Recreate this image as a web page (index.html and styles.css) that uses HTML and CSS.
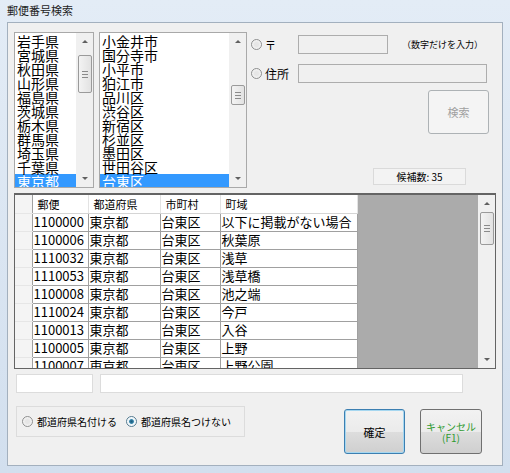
FILE: index.html
```html
<!DOCTYPE html>
<html lang="ja">
<head>
<meta charset="utf-8">
<link rel="stylesheet" href="styles.css">
</head>
<body>
<div class="window">
  <div class="titlebar">郵便番号検索</div>
  <div class="client">
    <div class="top">
      <div class="listbox lb1">
        <div class="items">
          <div class="item">岩手県</div>
          <div class="item">宮城県</div>
          <div class="item">秋田県</div>
          <div class="item">山形県</div>
          <div class="item">福島県</div>
          <div class="item">茨城県</div>
          <div class="item">栃木県</div>
          <div class="item">群馬県</div>
          <div class="item">埼玉県</div>
          <div class="item">千葉県</div>
          <div class="item sel">東京都</div>
        </div>
        <div class="vscroll">
          <div class="arrow up"></div>
          <div class="track"><div class="thumb t1"><span class="grip"></span></div></div>
          <div class="arrow down"></div>
        </div>
      </div>
      <div class="listbox lb2">
        <div class="items">
          <div class="item">小金井市</div>
          <div class="item">国分寺市</div>
          <div class="item">小平市</div>
          <div class="item">狛江市</div>
          <div class="item">品川区</div>
          <div class="item">渋谷区</div>
          <div class="item">新宿区</div>
          <div class="item">杉並区</div>
          <div class="item">墨田区</div>
          <div class="item">世田谷区</div>
          <div class="item sel">台東区</div>
        </div>
        <div class="vscroll">
          <div class="arrow up"></div>
          <div class="track"><div class="thumb t2"><span class="grip"></span></div></div>
          <div class="arrow down"></div>
        </div>
      </div>
      <div class="right">
        <div class="row r1">
          <span class="radio"></span><span class="rlabel zip">〒</span>
          <span class="textbox tb-zip"></span>
          <span class="note">（数字だけを入力）</span>
        </div>
        <div class="row r2">
          <span class="radio"></span><span class="rlabel">住所</span>
          <span class="textbox tb-addr"></span>
        </div>
        <div class="search-row"><div class="btn disabled search">検索</div></div>
        <div class="count-row"><div class="count">候補数: 35</div></div>
      </div>
    </div>

    <div class="grid">
      <div class="table-wrap">
        <table class="tbl">
          <tr class="hdr"><th class="rh"></th><th class="c1">郵便</th><th class="c2">都道府県</th><th class="c3">市町村</th><th class="c4">町域</th></tr>
          <tr><td class="rh"></td><td>1100000</td><td>東京都</td><td>台東区</td><td>以下に掲載がない場合</td></tr>
          <tr><td class="rh"></td><td>1100006</td><td>東京都</td><td>台東区</td><td>秋葉原</td></tr>
          <tr><td class="rh"></td><td>1110032</td><td>東京都</td><td>台東区</td><td>浅草</td></tr>
          <tr><td class="rh"></td><td>1110053</td><td>東京都</td><td>台東区</td><td>浅草橋</td></tr>
          <tr><td class="rh"></td><td>1100008</td><td>東京都</td><td>台東区</td><td>池之端</td></tr>
          <tr><td class="rh"></td><td>1110024</td><td>東京都</td><td>台東区</td><td>今戸</td></tr>
          <tr><td class="rh"></td><td>1100013</td><td>東京都</td><td>台東区</td><td>入谷</td></tr>
          <tr><td class="rh"></td><td>1100005</td><td>東京都</td><td>台東区</td><td>上野</td></tr>
          <tr><td class="rh"></td><td>1100007</td><td>東京都</td><td>台東区</td><td>上野公園</td></tr>
        </table>
      </div>
      <div class="vscroll gscroll">
        <div class="arrow up"></div>
        <div class="track"><div class="thumb t3"><span class="grip"></span></div></div>
        <div class="arrow down"></div>
      </div>
    </div>

    <div class="fields">
      <span class="textbox f1"></span>
      <span class="textbox f2"></span>
    </div>

    <div class="bottom">
      <div class="group">
        <span class="radio"></span><span class="glabel">都道府県名付ける</span>
        <span class="radio on"></span><span class="glabel">都道府県名つけない</span>
      </div>
      <div class="btn ok">確定</div>
      <div class="btn cancel">キャンセル<br>(F1)</div>
    </div>
  </div>
</div>
</body>
</html>
```
FILE: styles.css
```css
* { box-sizing: border-box; }
html, body { margin: 0; padding: 0; }
body {
  width: 510px; height: 473px; overflow: hidden;
  font-family: "Noto Sans CJK JP", "Noto Sans", sans-serif;
  background: #dae5f2;
}
.window {
  width: 510px; height: 473px;
  background: linear-gradient(#e3ecf6, #d2dfee);
  display: flex; flex-direction: column;
}
.titlebar {
  height: 22px; padding: 3px 0 0 7px;
  font-size: 11px; line-height: 14px; color: #1e1e1e;
}
.client {
  margin: 0 7px 7px 7px;
  flex: 1;
  background: #f0f0f0;
  border: 1px solid #a3b0be;
  padding: 9px 0 0 6px;
}
.top { display: flex; height: 156px; }
.listbox {
  height: 156px; background: #fff;
  border: 1px solid #a9a9a9;
  display: flex;
}
.lb1 { width: 80px; }
.lb2 { width: 148px; margin-left: 5px; }
.items { flex: 1; overflow: hidden; padding-top: 1px; }
.item {
  font-size: 14px; line-height: 14px; height: 14px;
  padding-left: 2px; color: #000; white-space: nowrap;
}
.item.sel { background: #3399ff; color: #fff; }
.vscroll {
  width: 17px; background: #f0f0f0;
  display: flex; flex-direction: column;
  border-left: 1px solid #f0f0f0;
}
.arrow { height: 17px; position: relative; }
.arrow::after {
  content: ""; position: absolute; left: 5px; top: 7px;
  border-left: 3px solid transparent; border-right: 3px solid transparent;
}
.arrow.up::after { border-bottom: 3px solid #606060; }
.arrow.down::after { border-top: 3px solid #606060; }
.track { flex: 1; position: relative; }
.thumb {
  position: absolute; left: 1px; right: 1px;
  background: linear-gradient(90deg, #f3f3f3, #e2e2e2);
  border: 1px solid #9a9a9a; border-radius: 2px;
  display: flex; align-items: center; justify-content: center;
}
.grip { width: 6px; height: 7px; border-top: 1px solid #8a8a8a; border-bottom: 1px solid #8a8a8a; position: relative; }
.grip::after { content: ""; position: absolute; left: 0; right: 0; top: 2px; border-top: 1px solid #8a8a8a; }
.t1 { top: 5px; height: 38px; }
.t2 { top: 35px; height: 20px; }
.t3 { top: 0px; height: 33px; }

.right { flex: 1; padding-left: 4px; display: flex; flex-direction: column; }
.row { display: flex; align-items: center; height: 19px; }
.r1 { margin-top: 3px; }
.r2 { margin-top: 10px; }
.radio {
  width: 11px; height: 11px; border-radius: 50%;
  border: 1px solid #8e8f8f;
  background: radial-gradient(circle, #e6e6e6 30%, #f8f8f8 80%);
  display: inline-block; flex: none;
}
.radio.on { background: radial-gradient(circle, #1c5a7a 0, #2f7fa6 30%, #eaf3f8 45%, #fff 80%); border-color: #557b91; }
.rlabel { font-size: 12px; margin-left: 3px; width: 33px; color: #000; }
.rlabel.zip { font-size: 11px; }
.textbox {
  display: inline-block; height: 19px;
  border: 1px solid #adadad; background: #f0f0f0;
}
.tb-zip { width: 90px; }
.tb-addr { width: 189px; }
.note { font-size: 9px; margin-left: 14px; color: #000; white-space: nowrap; }
.search-row { display: flex; justify-content: flex-end; padding-right: 13px; margin-top: 7px; }
.btn {
  display: flex; align-items: center; justify-content: center; text-align: center;
  border: 1px solid #707070; border-radius: 3px;
  background: linear-gradient(#f2f2f2 0, #ebebeb 50%, #dddddd 51%, #cfcfcf 100%);
  font-size: 11px; color: #000;
}
.btn.disabled { background: #f4f4f4; border-color: #adb2b5; color: #a0a0a0; }
.search { width: 61px; height: 44px; }
.count-row { display: flex; justify-content: flex-end; padding-right: 36px; margin-top: 34px; }
.count {
  width: 93px; height: 17px; border: 1px solid #dadada; background: #f3f3f3;
  font-size: 10px; line-height: 15px; text-align: center; color: #000;
}

.grid {
  margin-top: 5px; width: 482px; height: 176px;
  border: 1px solid #646464; border-top-width: 2px;
  background: #ababab;
  display: flex;
}
.table-wrap { flex: 1; overflow: hidden; }
.tbl { border-collapse: collapse; background: #fff; }
.tbl th, .tbl td {
  height: 18px; padding: 0 0 0 1px;
  border: 1px solid #a0a0a0; border-top: none;
  text-align: left; white-space: nowrap; overflow: hidden;
  font-weight: normal; color: #000;
}
.tbl th { font-size: 11px; padding-left: 5px; border-bottom: 1px solid #d5d5d5; border-right-color: #e3e3e3; background: #fff; }
.tbl td { font-size: 13px; line-height: 16px; }
.tbl .rh { width: 17px; background: #f4f4f4; border-left: none; border-right: 1px solid #a0a0a0; border-bottom-color: #e6e6e6; }
.tbl .c1 { width: 56px; }
.tbl .c2 { width: 72px; }
.tbl .c3 { width: 60px; }
.tbl .c4 { width: 137px; }
.gscroll { background: #f0f0f0; width: 17px; }

.fields { display: flex; margin-top: 5px; padding-left: 2px; }
.f1 { width: 77px; background: #fff; border-color: #dcdcdc; }
.f2 { width: 363px; margin-left: 7px; background: #fff; border-color: #dcdcdc; }

.bottom { display: flex; margin-top: 13px; align-items: flex-start; }
.group {
  margin-left: 2px; width: 229px; height: 31px; flex: none;
  border: 1px solid #dcdcdc;
  display: flex; align-items: center; padding-left: 5px;
}
.glabel { font-size: 10px; margin-left: 4px; margin-right: 9px; color: #000; white-space: nowrap; }
.ok {
  width: 61px; height: 45px; margin-left: 99px; margin-top: 3px; flex: none;
  border-color: #3c7fb1; box-shadow: inset 0 0 0 1px #a6d7f0;
}
.cancel {
  width: 62px; height: 45px; margin-left: 15px; margin-top: 3px; flex: none;
  color: #2e9a2e; line-height: 11px; font-size: 10px;
}
```
